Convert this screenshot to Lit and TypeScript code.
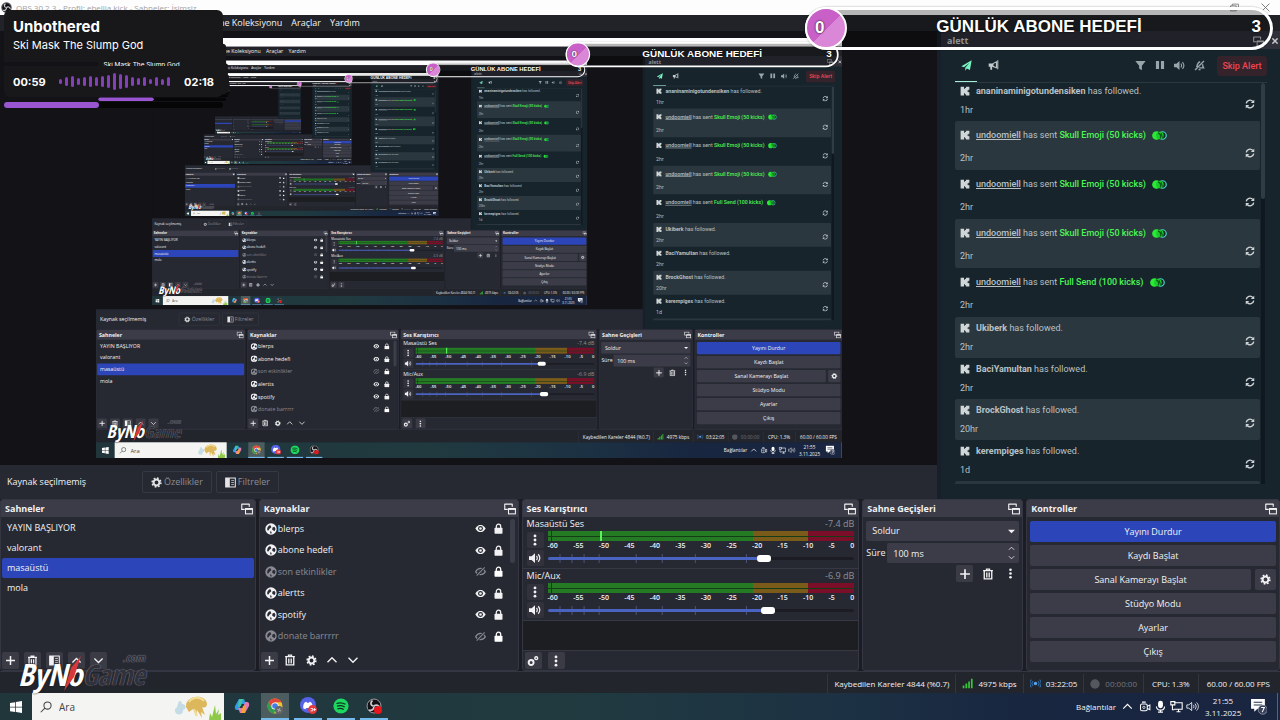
import { LitElement, html, svg, css, nothing } from "lit";
import { customElement, property } from "lit/decorators.js";
import { classMap } from "lit/directives/class-map.js";

const icon = (size: number, body: unknown, cls = "", box = 16) =>
  html`<svg class="ico ${cls}" width=${size} height=${size} viewBox="0 0 ${box} ${box}" aria-hidden="true">${body}</svg>`;

const plus = svg`<path d="M8 1.500v13M1.500 8h13" stroke="currentColor" stroke-width="2.200" fill="none"/>`;
const trash = svg`<path d="M1.500 3.500h13M6 3V1.500h4v1.500" stroke="currentColor" stroke-width="1.800" fill="none"/><path d="M3 4v10.500h10V4M6.400 6v6.500M9.600 6v6.500" stroke="currentColor" stroke-width="1.800" fill="none"/>`;
const gear = svg`<circle cx="8" cy="8" r="4.300" fill="none" stroke="currentColor" stroke-width="3"/><circle cx="8" cy="8" r="6.400" fill="none" stroke="currentColor" stroke-width="2.200" stroke-dasharray="2.500 2.520"/>`;
const up = svg`<path d="M2 11l6-6 6 6" stroke="currentColor" stroke-width="1.800" fill="none"/>`;
const down = svg`<path d="M2 5l6 6 6-6" stroke="currentColor" stroke-width="1.800" fill="none"/>`;
const kebab = svg`<circle cx="8" cy="2.500" r="1.900" fill="currentColor"/><circle cx="8" cy="8" r="1.900" fill="currentColor"/><circle cx="8" cy="13.500" r="1.900" fill="currentColor"/>`;
const globe = svg`<circle cx="8" cy="8" r="7.600" fill="currentColor"/><path d="M7 2.500C4 3.500 2.500 6 3 9.500l1.500.5L6 7.500 8.500 5.500z" fill="#2a2c35"/><path d="M10 6l2.500-1 1.500 2.500-1 3-2-.5-1.500-1.500z" fill="#2a2c35"/><path d="M6.500 11l2 .5.500 2-1.500.8z" fill="#2a2c35"/>`;
const eye = svg`<path d="M.5 8C3 3.500 5.500 2.800 8 2.800S13 3.500 15.500 8C13 12.500 10.500 13.200 8 13.200S3 12.500.5 8z" fill="currentColor"/><circle cx="8" cy="8" r="3.600" fill="#272932"/><circle cx="8" cy="8" r="1.900" fill="currentColor"/>`;
const eyeOff = svg`<path d="M1 8.500C3 4.500 5.500 3.500 8 3.500S13 4.500 15 8.500C13 11.800 10.500 12.500 8 12.500S3 11.800 1 8.500z" fill="none" stroke="currentColor" stroke-width="1.700"/><circle cx="8" cy="8" r="2" fill="currentColor"/><path d="M2.500 14L14 2" stroke="#272932" stroke-width="4"/><path d="M2.500 14L14 2" stroke="currentColor" stroke-width="1.500"/>`;
const lock = svg`<path d="M4.800 8V5a3.200 3.200 0 016.400 0v3" fill="none" stroke="currentColor" stroke-width="1.800"/><rect x="2.200" y="7" width="11.600" height="8.500" rx="1" fill="currentColor"/>`;
const speaker = svg`<path d="M0 5.500h3.500L8 1.500v13L3.500 10.500H0z" fill="currentColor"/><path d="M10 5.200c1.300 1.700 1.300 3.900 0 5.600M12.300 3c2.500 3 2.500 7 0 10" stroke="currentColor" stroke-width="1.600" fill="none"/>`;
const float = svg`<path d="M1 1.500h10M1 1v7.500h4M11 1v4" stroke="currentColor" stroke-width="1.500" fill="none"/><rect x="6" y="8" width="9.200" height="6.500" fill="none" stroke="currentColor" stroke-width="1.400"/><path d="M5.500 7.800h10.200" stroke="currentColor" stroke-width="2.600"/>`;
const gears = svg`<circle cx="5.500" cy="10" r="3.300" fill="none" stroke="currentColor" stroke-width="2.600"/><circle cx="12.300" cy="4.300" r="1.900" fill="none" stroke="currentColor" stroke-width="1.900"/>`;
const filters = svg`<rect x="1" y="1.500" width="14" height="13" fill="none" stroke="currentColor" stroke-width="1.500"/><rect x="1" y="1.500" width="6" height="13" fill="currentColor"/><path d="M9 5h4M9 8h4M9 11h4" stroke="currentColor"/>`;
const kick = svg`<path d="M1 1h5.500v3.500H8V3h1.500V1H15v5h-1.500v1H12v2h1.500v1H15v5H9.500v-2H8v-1.500H6.500V15H1z" fill="currentColor"/>`;
const reload = svg`<path d="M2 7a6 6 0 0110.500-3M14 9a6 6 0 01-10.500 3" stroke="currentColor" stroke-width="2.200" fill="none"/><path d="M14.800 1v5.500H9.300zM1.200 15V9.500h5.500z" fill="currentColor"/>`;
const plane = svg`<path d="M15.500.5L13 14.500l-4.500-2-2.300 3v-4.300L12.500 4 4.300 10.500.5 9z" fill="currentColor"/>`;
const horn = svg`<path d="M1 5h5l7-3.500v11L6 9.800V14H3.300V9.800H1z" fill="currentColor"/><path d="M8 5.500l3.500-1.600v6.200L8 8.700z" fill="#17242c"/><path d="M14.200.5v13" stroke="currentColor" stroke-width="1.500"/>`;
const funnel = svg`<path d="M.5 1.500h15L10 8.500V15l-4-2.500v-4z" fill="currentColor"/>`;
const pause = svg`<path d="M1.500 1.500h5v13h-5zM9.500 1.500h5v13h-5z" fill="currentColor"/>`;
const mute = svg`<path d="M1.500 14.500L14.500 1.500M4 10.500c1-6 2-7.500 5-8M12.500 6c0 3 .5 4 1.500 5.500H7.500M6.500 14h3" stroke="currentColor" stroke-width="2" fill="none"/>`;
const obsLogo = svg`<circle cx="8" cy="8" r="7.500" fill="#141216"/><circle cx="8" cy="8" r="7" fill="none" stroke="#c8c8ca" stroke-width=".8"/><path d="M7.500 8C4.500 7.500 4 4.500 6.500 2.500M8 8c2.500-2 5-.5 5.500 2M8 8.500c0 3-2.500 4.500-5 3.500" stroke="#c8c8ca" stroke-width="1.800" fill="none"/>`;
const coins = svg`<circle cx="6" cy="7" r="5.800" fill="#2bea35"/><circle cx="14" cy="7" r="5" fill="#142b2c" stroke="#49d9c0" stroke-width="1.600"/><circle cx="10.500" cy="7" r="5" fill="#1cc92a"/><path d="M8 3.500c3 1 4 4 3 7.500M12 4l2 6" stroke="#0d5a1c" stroke-width="1.500" fill="none"/>`;

interface Follow { user: string; gift?: string; time: string; }
const EVENTS: Follow[] = [
  { user: "ananinaminigotundensiken", time: "1hr" },
  { user: "undoomiell", gift: "Skull Emoji (50 kicks)", time: "2hr" },
  { user: "undoomiell", gift: "Skull Emoji (50 kicks)", time: "2hr" },
  { user: "undoomiell", gift: "Skull Emoji (50 kicks)", time: "2hr" },
  { user: "undoomiell", gift: "Full Send (100 kicks)", time: "2hr" },
  { user: "Ukiberk", time: "2hr" },
  { user: "BaciYamultan", time: "2hr" },
  { user: "BrockGhost", time: "20hr" },
  { user: "kerempiges", time: "1d" },
];
const SCENES = ["YAYIN BAŞLIYOR", "valorant", "masaüstü", "mola"];
const SOURCES: [string, boolean][] = [
  ["blerps", true], ["abone hedefi", true], ["son etkinlikler", false],
  ["alertts", true], ["spotify", true], ["donate barrrrr", false],
];
const TICKS = ["-60", "-55", "-50", "-45", "-40", "-35", "-30", "-25", "-20", "-15", "-10", "-5", "0"];
const WAVE = [5, 9, 11, 7, 9, 11, 9, 11, 13, 17, 15, 13, 9, 7, 9, 5, 9, 6, 9];
const MENUS = ["Dosya", "Düzenle", "Görünüm", "Docklar", "Profil", "Sahne Koleksiyonu", "Araçlar", "Yardım"];

@customElement("obs-screen")
export class ObsScreen extends LitElement {
  @property({ type: Number }) depth = 0;

  static styles = css`
    :host { display: grid; grid-template-rows: 15px 16px minmax(0, 1fr) 172px 22px 27px; position: relative; overflow: hidden;
      height: 100%; background: #1b1c24; color: #f2f2f4; font-family: "Open Sans", "Noto Sans", sans-serif; font-size: 9px; line-height: 16px; }
    * { box-sizing: border-box; }
    button, input, select { font: inherit; color: inherit; border: 0; margin: 0; padding: 0; background: none; }
    button { display: flex; align-items: center; justify-content: center; white-space: nowrap; }
    .ico { display: block; flex: none; }
    .titlebar { background: #fdfdfd; color: #a2a2a2; display: flex; align-items: center; gap: 4px; padding: 0 10px 0 1px; font-size: 8px; white-space: nowrap; }
    .titlebar .wins { display: flex; gap: 22px; color: #666; margin-left: auto; }
    .menubar { display: flex; align-items: center; gap: 9px; padding-left: 4px; background: #212329; }
    .menubar a { color: inherit; text-decoration: none; white-space: nowrap; }
    .work { display: grid; grid-template-columns: minmax(0, 1fr) 339px; column-gap: 4px; min-height: 0; background: #17202a; }
    .left { display: grid; grid-template-rows: minmax(0, 1fr) 34px; min-height: 0; }
    .canvas { background: #131317; display: flex; align-items: center; justify-content: center; overflow: hidden; }
    .capture { width: 746px; height: 420px; flex: none; overflow: hidden; }
    .shot { width: 1280px; height: 720px; transform: scale(0.5834); transform-origin: 0 0; }
    .context { background: #272932; display: flex; align-items: center; gap: 4px; padding-left: 7px; }
    .context .none { width: 131px; }
    .context button { height: 22px; gap: 2px; padding: 0 8px; border: 1px solid #363843; border-radius: 2px; color: #8c8e96; }
    .context button .ico { color: #e4e4e6; }

    .alerts { background: #17242c; display: grid; grid-template-rows: 18px 34px minmax(0, 1fr) 15px; min-height: 0; font-family: Roboto, sans-serif; font-size: 9px; color: #b9c1c5; }
    .alerts header { background: #2f303a; display: flex; align-items: center; justify-content: space-between; padding: 2px 2px 0 6px; font: bold 9px/14px "Open Sans", sans-serif; color: #c8c8cc; }
    .alerts header div { display: flex; gap: 8px; align-items: center; }
    .tools { margin: 0 13px 0 14px; display: flex; align-items: center; color: #9aa5aa; border-bottom: 1px solid #2a3840; }
    .tools .tab { width: 22px; height: 33px; color: #c3cbce; }
    .tools .tab + .tab { margin-left: 5px; }
    .tools .on { color: #79f3c4; border-bottom: 1px solid #a5efd9; }
    .tools .set { display: flex; gap: 9px; margin-left: auto; margin-right: 12px; }
    .skip { width: 50px; height: 20px; background: #35232c; color: #ee4550; font-weight: 500; border-radius: 3px; }
    .feed { margin-left: 14px; margin-right: 15px; display: grid; grid-template-columns: minmax(0, 1fr) 4px; column-gap: 1px; overflow: hidden; }
    .feed ul { list-style: none; margin: -3px 0 0; padding: 0; }
    .feed li { height: 41px; padding: 2px 5px; display: grid; grid-template-columns: minmax(0, 1fr) auto; border-radius: 2px; white-space: nowrap; }
    .feed li.gift { height: 49px; padding: 6px 5px; row-gap: 5px; }
    .feed li:nth-child(even) { background: #2b373e; }
    .feed .line { grid-column: 1 / 3; display: flex; align-items: center; gap: 6px; }
    .feed .line b { font-weight: 700; }
    .feed .gift .line b { font-weight: 500; text-decoration: underline; }
    .feed em { font-style: normal; font-weight: 500; color: #4bf655; }
    .feed time { padding-top: 3px; }
    .feed .gift time { padding-top: 2px; }
    .feed .ico { color: #d0d6d8; }
    .bar { background: #0e181e; }
    .bar i { display: block; height: 116px; background: #2f3c44; border-radius: 2px; }

    .docks { display: grid; grid-template-columns: 256fr 260fr 338fr 161fr 254fr; gap: 3px; }
    .dock { background: #272932; border: 1px solid #343641; border-radius: 3px; display: flex; flex-direction: column; min-width: 0; overflow: hidden; }
    .dock > header { height: 17px; background: #3b3c47; display: flex; align-items: center; justify-content: space-between; padding: 0 2px 0 4px; flex: none; }
    .dock h2 { font-size: 9px; line-height: 16px; margin: 0; font-weight: 700; }
    .foot { margin-top: auto; height: 20px; display: flex; align-items: center; padding-left: 1px; flex: none; }
    .foot button, .sq { width: 17px; height: 17px; border-radius: 2px; }
    .hot { background: #3a3b45; }
    .scenes { list-style: none; margin: 0; padding: 1px 1px 0; }
    .scenes li { height: 20px; line-height: 20px; padding-left: 5px; border-radius: 2px; }
    .scenes .sel { background: #2c46b9; }
    .scene-foot { gap: 5px; }
    .sources { display: grid; grid-template-columns: minmax(0, 1fr) 5px; height: 130px; padding-right: 3px; }
    .sources ul { list-style: none; margin: 0; padding: 1px 6px 0 5px; display: flex; flex-direction: column; }
    .sources li { flex: 1; display: flex; align-items: center; gap: 1px; }
    .sources li .eye { margin-left: auto; margin-right: 6px; }
    .sources .off { color: #8a8b92; }
    .sources .off .lock { color: #fff; }
    .sources .thumb { background: #3c3e49; height: 44px; border-radius: 3px; margin-top: 2px; }
    .source-foot button { margin-right: 4px; }
    .mixer { background: #1d1e22; flex: 1; }
    .chan { height: 52px; background: #272932; border-bottom: 1px solid #363843; display: grid; grid-template-columns: 17px minmax(0, 1fr); grid-template-rows: 14px 17px 20px; column-gap: 4px; padding: 0 4px; }
    .chan .name { grid-column: 1 / 3; display: flex; justify-content: space-between; line-height: 14px; }
    .chan .db { color: #8d8f97; }
    .chan button { width: 17px; height: 16px; background: #31323c; border-radius: 2px; align-self: center; }
    .meter { height: 10px; position: relative; background: linear-gradient(90deg, #247b24 67%, #7b5b1a 67% 85%, #7b0f2a 85%); }
    .meter::before { content: ""; position: absolute; left: 0; right: 0; top: 5px; height: 1px; background: #143c16; }
    .meter::after { content: ""; position: absolute; left: 3px; top: 0; width: 1px; height: 10px; background: #12400f; }
    .peak { position: absolute; left: 17%; top: 0; width: 2px; height: 10px; background: #5df25d; }
    .scale { display: flex; justify-content: space-between; font-size: 7px; line-height: 9px; font-weight: 600; }
    .fader { display: grid; align-items: center; height: 20px; }
    .fader > * { grid-area: 1 / 1; }
    .notches { width: 100%; height: 9px; display: block; }
    .fader input { appearance: none; -webkit-appearance: none; width: 100%; height: 3px; border-radius: 2px; background: linear-gradient(90deg, #4a62c0 var(--level), #1b1c24 var(--level)); }
    .fader input::-webkit-slider-thumb { -webkit-appearance: none; width: 14px; height: 7px; border-radius: 3px; background: #fff; }
    .mix-foot { border-top: 1px solid #363843; gap: 6px; padding-left: 2px; }
    .trans { padding: 4px 3px; display: grid; grid-template-columns: 21px minmax(0, 1fr); row-gap: 2px; }
    .pick { grid-column: 1 / 3; position: relative; display: flex; align-items: center; background: #3b3c47; border-radius: 2px; height: 20px; }
    .pick select, .pick input { appearance: none; -webkit-appearance: none; width: 100%; height: 20px; padding-left: 6px; outline: none; }
    .pick .ico { position: absolute; right: 4px; }
    .pick .spin { position: absolute; right: 0; display: grid; gap: 2px; width: 16px; }
    .pick .spin .ico { position: static; margin: 0 auto; }
    .pick.dur { grid-column: 2; }
    .trans label { align-self: center; }
    .trans-foot { grid-column: 1 / 3; display: flex; justify-content: flex-end; gap: 6px; }
    .ctl { padding: 4px 3px 0; display: flex; flex-direction: column; gap: 3px; }
    .ctl button { background: #3b3c47; border-radius: 2px; height: 21px; flex: 1; }
    .ctl > button { flex: none; }
    .ctl .live { background: #2c46b9; }
    .ctl .row { display: flex; gap: 4px; }
    .ctl .row .cog { flex: none; width: 21px; }

    .status { display: flex; justify-content: flex-end; align-items: stretch; padding: 2px 2px 0 0; background: #23252d; border-top: 1px solid #343641; font-size: 8px; }
    .status span { display: flex; align-items: center; gap: 5px; padding: 0 6px; border-left: 1px solid #33353f; white-space: nowrap; }
    .status .dim { color: #74767e; }
    .status .wide { padding: 0 8px; }

    .taskbar { display: flex; align-items: stretch; background: linear-gradient(90deg, #20363b, #203a40 45%, #1c3143 66%, #182640 80%, #1a2540); font-size: 8px; }
    .taskbar .start { width: 32px; }
    .search { width: 192px; background: #f4f4f2; color: #444; display: flex; align-items: center; padding-left: 8px; gap: 7px; font-size: 10px; }
    .search input { width: 60px; flex: 1; min-width: 0; color: #444; }
    .search input::placeholder { color: #444; opacity: 1; }
    .apps { display: flex; gap: 5px; margin-left: 4px; }
    .apps button { width: 28px; border-bottom: 2px solid transparent; }
    .apps .run { border-color: #76b9ed; }
    .apps .front { background: #4d5d5f; }
    .tray { display: flex; align-items: center; gap: 3px; margin-left: auto; white-space: nowrap; }
    .clock { text-align: center; line-height: 12px; width: 36px; margin-left: 3px; }
    .note { margin: 0 7px 0 6px; }
    .edge { width: 1px; align-self: stretch; background: #56617a; margin-right: 2px; }

    .song { position: absolute; left: 4px; top: 10px; width: 219px; display: flex; flex-direction: column; font-family: Inter, sans-serif; color: #fff; }
    .track { background: #18181a; border-radius: 6px 6px 0 0; padding: 8px 9px 0; height: 52px; }
    .track b { display: block; font-size: 15px; line-height: 18px; }
    .track span { display: block; font-size: 11px; line-height: 18px; }
    .play { margin-top: 4px; height: 31px; background: #18181a; border-radius: 0 0 6px 6px; padding: 0 9px; display: flex; align-items: center; justify-content: space-between; font-size: 11px; font-weight: 700; }
    .wave { display: flex; align-items: center; gap: 3px; }
    .wave i { width: 3px; border-radius: 2px; background: #8440b8; }
    .prog { margin-top: 5px; height: 6px; border-radius: 3px; background: #060607; }
    .prog i { display: block; width: 95px; height: 6px; border-radius: 3px; background: #9a55d0; }
    .goal { position: absolute; right: 7px; top: 7px; width: 468px; height: 43px; border: 3px solid #fff; border-radius: 22px; background: rgba(0, 0, 0, .28); display: flex; align-items: center; justify-content: center; font: bold 17px/20px "Liberation Sans", Arial, sans-serif; color: #fff; box-shadow: 0 0 2px rgba(0, 0, 0, .4); text-shadow: 0 0 2px #000; padding-bottom: 3px; }
    .goal .count { position: absolute; left: -3px; top: -3px; width: 42px; height: 42px; border: 2px solid #fff; border-radius: 50%; background: linear-gradient(135deg, #c860c8 52%, #d987d6 52%); display: flex; align-items: center; padding-left: 8px; }
    .goal .max { position: absolute; right: 9px; }
    .brand { position: absolute; left: 18px; bottom: 29px; height: 38px; display: flex; align-items: flex-end; font: italic bold 31px/34px "Liberation Sans Narrow", "Open Sans Condensed", "Liberation Sans", sans-serif; color: #fff; text-shadow: 0 0 2px #111; white-space: nowrap; }
    .brand .game { color: #30313a; text-shadow: 0 0 1px #a5a6ae; font-size: 28px; }
    .brand .com { position: absolute; right: 0; top: -2px; font-size: 12px; line-height: 14px; color: #30313a; text-shadow: 0 0 1px #a5a6ae; }
    .brand .slash { position: absolute; left: 44px; top: 3px; }
  `;

  private dockHead(title: string) {
    return html`<header><h2>${title}</h2>${icon(12, float)}</header>`;
  }

  private channel(id: string, name: string, db: string, level: number, peak: boolean) {
    return html`<div class="chan">
      <div class="name"><label for=${id}>${name}</label><span class="db">${db} dB</span></div>
      <button aria-label="${name} seçenekleri">${icon(12, kebab)}</button>
      <div>
        <div class="meter">${peak ? html`<i class="peak"></i>` : nothing}</div>
        <div class="scale">${TICKS.map((t) => html`<span>${t}</span>`)}</div>
      </div>
      <button aria-label="${name} sesini kapat">${icon(12, speaker)}</button>
      <div class="fader">
        <svg class="notches" viewBox="0 0 306 9" preserveAspectRatio="none" aria-hidden="true">
          ${[12, 24, 36, 51, 88, 114, 147, 198].map((x) => svg`<path d="M${x} 0v9" stroke="#4b5378"/>`)}
        </svg>
        <input id=${id} type="range" min="0" max="1000" .value=${String(level)} style="--level:${level / 10}%">
      </div>
    </div>`;
  }

  private windowBars() {
    return html`
      <div class="titlebar">${icon(11, obsLogo)}<span>OBS 30.2.3 - Profil: ebellia kick - Sahneler: İsimsiz</span>
        <div class="wins">
          ${icon(9, svg`<path d="M2 9h12" stroke="currentColor"/>`)}
          ${icon(9, svg`<path d="M1 5h10v9H1zM4 5V2h11v9h-4" fill="none" stroke="currentColor" stroke-width="1.300"/>`)}
          ${icon(9, svg`<path d="M1 1l14 14M15 1L1 15" stroke="currentColor" stroke-width="1.500"/>`)}
        </div>
      </div>
      <nav class="menubar">${MENUS.map((m) => html`<a href="#">${m}</a>`)}</nav>`;
  }

  private alerts() {
    return html`<section class="alerts">
      <header>alett<div>${icon(11, float)}${icon(6, svg`<path d="M1 1l14 14M15 1L1 15" stroke="currentColor" stroke-width="4"/>`)}</div></header>
      <div class="tools">
        <button class="tab on" aria-label="Etkinlikler">${icon(11, plane)}</button>
        <button class="tab" aria-label="Duyurular">${icon(11, horn)}</button>
        <div class="set">${icon(11, funnel)}${icon(10, pause)}${icon(11, speaker)}${icon(11, mute)}</div>
        <button class="skip">Skip Alert</button>
      </div>
      <div class="feed">
        <ul>
          ${EVENTS.map((e) => html`<li class=${classMap({ gift: !!e.gift })}>
            <div class="line">${icon(10, kick)}<span><b>${e.user}</b> ${e.gift ? html`has sent <em>${e.gift}</em>` : "has followed."}</span>
              ${e.gift ? html`<svg width="15" height="11" viewBox="0 0 20 14" aria-hidden="true">${coins}</svg>` : nothing}</div>
            <time>${e.time}</time>${icon(10, reload)}
          </li>`)}
          <li></li>
        </ul>
        <div class="bar"><i></i></div>
      </div>
    </section>`;
  }

  private docks() {
    return html`<div class="docks">
      <section class="dock">${this.dockHead("Sahneler")}
        <ul class="scenes">${SCENES.map((s, i) => html`<li class=${classMap({ sel: i === 2 })}>${s}</li>`)}</ul>
        <div class="foot scene-foot">
          <button class="hot" aria-label="Sahne ekle">${icon(11, plus)}</button>
          <button class="hot" aria-label="Sahneyi sil">${icon(11, trash)}</button>
          <button class="hot" aria-label="Sahne filtreleri">${icon(11, filters)}</button>
          <button class="hot" aria-label="Yukarı">${icon(11, up)}</button>
          <button class="hot" aria-label="Aşağı">${icon(11, down)}</button>
        </div>
      </section>
      <section class="dock">${this.dockHead("Kaynaklar")}
        <div class="sources">
          <ul>${SOURCES.map(([name, on]) => html`<li class=${classMap({ off: !on })}>
            ${icon(12, globe)}<span>${name}</span>${icon(11, on ? eye : eyeOff, "eye")}${icon(11, lock, "lock")}</li>`)}</ul>
          <div class="thumb"></div>
        </div>
        <div class="foot source-foot">
          <button class="hot" aria-label="Kaynak ekle">${icon(11, plus)}</button>
          <button aria-label="Kaynağı sil">${icon(12, trash)}</button>
          <button aria-label="Kaynak özellikleri">${icon(11, gear)}</button>
          <button aria-label="Yukarı taşı">${icon(12, up)}</button>
          <button aria-label="Aşağı taşı">${icon(12, down)}</button>
        </div>
      </section>
      <section class="dock">${this.dockHead("Ses Karıştırıcı")}
        <div class="mixer">
          ${this.channel("desk", "Masaüstü Ses", "-7.4", 716, true)}
          ${this.channel("mic", "Mic/Aux", "-6.9", 728, false)}
        </div>
        <div class="foot mix-foot">
          <button class="hot" aria-label="Gelişmiş ses özellikleri">${icon(12, gears)}</button>
          <button class="hot" aria-label="Karıştırıcı menüsü">${icon(12, kebab)}</button>
        </div>
      </section>
      <section class="dock">${this.dockHead("Sahne Geçişleri")}
        <div class="trans">
          <div class="pick"><select aria-label="Geçiş"><option>Soldur</option></select>
            ${icon(7, svg`<path d="M0 4h16l-8 8z" fill="currentColor"/>`)}</div>
          <label for="dur">Süre</label>
          <div class="pick dur"><input id="dur" .value=${"100 ms"}><div class="spin">${icon(7, up)}${icon(7, down)}</div></div>
          <div class="trans-foot">
            <button class="sq hot" aria-label="Geçiş ekle">${icon(12, plus)}</button>
            <button class="sq" aria-label="Geçişi sil">${icon(12, trash)}</button>
            <button class="sq" aria-label="Geçiş menüsü">${icon(11, kebab)}</button>
          </div>
        </div>
      </section>
      <section class="dock">${this.dockHead("Kontroller")}
        <div class="ctl">
          <button class="live">Yayını Durdur</button>
          <button>Kaydı Başlat</button>
          <div class="row"><button>Sanal Kamerayı Başlat</button><button class="cog" aria-label="Sanal kamera ayarları">${icon(11, gear)}</button></div>
          <button>Stüdyo Modu</button>
          <button>Ayarlar</button>
          <button>Çıkış</button>
        </div>
      </section>
    </div>`;
  }

  private statusBar() {
    return html`<div class="status">
      <span>Kaybedilen Kareler 4844 (%0.7)</span>
      <span>${icon(11, svg`<path d="M1 15v-4h2.500v4zM5 15V8h2.500v7zM9 15V5h2.500v10zM13 15V1h2.500v14z" fill="#35c735"/>`)}4975 kbps</span>
      <span>${icon(11, svg`<circle cx="8" cy="8" r="2.500" fill="#5aa2e8"/><path d="M4.500 4.500a5 5 0 000 7M11.500 4.500a5 5 0 010 7M2 2.500a8 8 0 000 11M14 2.500a8 8 0 010 11" stroke="#2c6fb0" stroke-width="1.500" fill="none"/>`)}03:22:05</span>
      <span class="dim">${icon(10, svg`<circle cx="8" cy="8" r="7.500" fill="#55575e"/>`)}00:00:00</span>
      <span class="wide">CPU: 1.3%</span>
      <span class="wide">60.00 / 60.00 FPS</span>
    </div>`;
  }

  private taskbar() {
    return html`<div class="taskbar">
      <button class="start" aria-label="Başlat">${icon(12, svg`<path d="M0 2.500l7-1v6H0zM8 1.300L16 0v7.500H8zM0 8.500h7v6l-7-1zM8 8.500h8V16l-8-1.300z" fill="#fff"/>`)}</button>
      <div class="search">${icon(12, svg`<circle cx="10" cy="6" r="4.800" fill="none" stroke="#444" stroke-width="1.400"/><path d="M6.500 9.500L1 15" stroke="#444" stroke-width="1.400"/>`)}
        <input type="text" aria-label="Ara" placeholder="Ara">
        <svg width="50" height="27" viewBox="0 0 50 27" aria-hidden="true">
          <path d="M5 8a3 3 0 013 3 3 3 0 011 6 4 4 0 11-6-3z" fill="#c5dce6"/>
          <path d="M12 14c-1-12 20-14 21-3 0 4-4 4-5 3l3 8-4-3 1 6-5-8-1 6-3-7-4 3z" fill="#dcb75c"/>
          <path d="M15 9c3-5 11-6 15-1M20 16l3 7" stroke="#f3dc95" stroke-width="2" fill="none"/>
          <path d="M35 27l1-7 2 4 3-12 1 9 3-5-1 6 3-2v7z" fill="#8fc94a"/>
        </svg>
      </div>
      <div class="apps">
        <button aria-label="Copilot">${icon(16, svg`<path d="M5 1h5l2 5H7L5 12H3C1 12 .5 10 1 8z" fill="#2f9be8"/><path d="M5 1h4L7 8 4 9z" fill="#45c4a0"/><path d="M11 15H6L4 10h5l2-6h2c2 0 2.500 2 2 4z" fill="#e07ab0"/><path d="M11 15H7l2-7 3-1z" fill="#f4a13c"/>`)}</button>
        <button class="run front" aria-label="Chrome">${icon(16, svg`<circle cx="8" cy="8" r="7.500" fill="#f1c232"/><path d="M1.500 4.300A7.500 7.500 0 0114.500 4.300H8L5 10z" fill="#e2453c"/><path d="M1.500 4.300L5 10l4 .5-2 5A7.500 7.500 0 011.500 4.300z" fill="#2f9c50"/><circle cx="8" cy="8" r="3.600" fill="#fff"/><circle cx="8" cy="8" r="2.800" fill="#3f7fe8"/><circle cx="12" cy="12" r="4" fill="#62656a"/><path d="M10 11l4 2M11 14l2-4" stroke="#aaa"/>`)}</button>
        <button class="run" aria-label="Discord, 9+ bildirim">${icon(17, svg`<circle cx="7.500" cy="7.500" r="7.500" fill="#5562e8"/><path d="M3 10.500c0-4 1-5.500 3-6l.6 1h1.800l.6-1c2 .5 3 2 3 6l-2 1-1-1.200H6L5 11.500z" fill="#fff"/><circle cx="11.800" cy="11.800" r="4.200" fill="#e5393f"/><path d="M10 10.800h2v2.200h-2M12.500 11.800h2.500M13.700 10.500v2.600" stroke="#fff" stroke-width=".8" fill="none"/>`)}</button>
        <button class="run" aria-label="Spotify">${icon(16, svg`<circle cx="8" cy="8" r="7.600" fill="#1ed760"/><path d="M3.500 5.500c3-1 6.500-.6 9 .8M4 8.200c2.500-.8 5.500-.5 7.700.8M4.500 10.800c2-.6 4.500-.4 6.300.7" stroke="#10331c" stroke-width="1.300" fill="none"/>`)}</button>
        <button class="run" aria-label="OBS">${icon(16, svg`${obsLogo}<circle cx="12" cy="12" r="4" fill="#e8171d"/>`)}</button>
      </div>
      <div class="tray">
        <span>Bağlantılar</span>
        ${icon(17, svg`<path d="M4 10l4-4 4 4" stroke="#fff" stroke-width="1.100" fill="none"/>`)}
        ${icon(12, svg`<rect x="2" y="4" width="9" height="9" rx="2" fill="none" stroke="#fff" stroke-width="1.400"/><circle cx="6.500" cy="8.500" r="1.500" fill="none" stroke="#fff"/><path d="M11 7l3.500-1.500v6L11 10M4 1.500h5" stroke="#fff" stroke-width="1.400" fill="none"/>`)}
        ${icon(13, svg`<rect x="5" y="1" width="6" height="9" rx="3" fill="#fff"/><path d="M3 8c0 6 10 6 10 0M8 12v3M5 15h6" stroke="#fff" stroke-width="1.400" fill="none"/>`)}
        ${icon(13, svg`<path d="M5 3.500h10v8H5M8 14.500h5M10.500 11.500v3M1 2h5v4H1zM3 6v6h2" stroke="#fff" stroke-width="1.300" fill="none"/>`)}
        ${icon(13, svg`<path d="M1 6h2.500L7 3v10L3.500 10H1z" fill="none" stroke="#fff"/><path d="M9 6c1 1.300 1 2.700 0 4M11 4.500c2 2.300 2 4.700 0 7M13 3c3 3.300 3 6.700 0 10" stroke="#fff" fill="none"/>`)}
        <div class="clock">21:55<br>3.11.2025</div>
        ${icon(17, svg`<path d="M1 1h13v9H7l-3 3v-3H1z" fill="#fff"/><path d="M3.500 4h8M3.500 6.500h8" stroke="#28324a"/><circle cx="12" cy="11" r="4.300" fill="#39415a" stroke="#aeb4c4" stroke-width=".6"/><path d="M10.500 9h3l-2 4.300" stroke="#fff" fill="none"/>`, "note")}
        <i class="edge"></i>
      </div>
    </div>`;
  }

  private overlays() {
    return html`
      <div class="song">
        <div class="track"><b>Unbothered</b><span>Ski Mask The Slump God</span></div>
        <div class="play"><span>00:59</span>
          <div class="wave">${WAVE.map((h) => html`<i style="height:${h}px"></i>`)}</div><span>02:18</span></div>
        <div class="prog"><i></i></div>
      </div>
      <div class="goal"><span class="count">0</span><span>GÜNLÜK ABONE HEDEFİ</span><span class="max">3</span></div>
      <div class="brand"><span>ByNo</span><span class="game">Game</span><span class="com">.com</span>
        <svg class="slash" width="20" height="36" viewBox="0 0 20 36" aria-hidden="true"><path d="M19 0L12 21 2 35 9 12z" fill="#d8383c"/></svg></div>`;
  }

  render() {
    return html`
      ${this.windowBars()}
      <div class="work">
        <div class="left">
          <div class="canvas"><div class="capture" inert>
            ${this.depth > 0 ? html`<div class="shot"><obs-screen .depth=${this.depth - 1}></obs-screen></div>` : nothing}
          </div></div>
          <div class="context"><span class="none">Kaynak seçilmemiş</span>
            <button>${icon(11, gear)}Özellikler</button>
            <button>${icon(11, filters)}Filtreler</button></div>
        </div>
        ${this.alerts()}
      </div>
      ${this.docks()}
      ${this.statusBar()}
      ${this.taskbar()}
      ${this.overlays()}`;
  }
}

@customElement("app-root")
export class AppRoot extends LitElement {
  static styles = css`
    :host { display: block; height: 100vh; min-height: 640px; }
  `;

  render() {
    return html`<obs-screen .depth=${5}></obs-screen>`;
  }
}
